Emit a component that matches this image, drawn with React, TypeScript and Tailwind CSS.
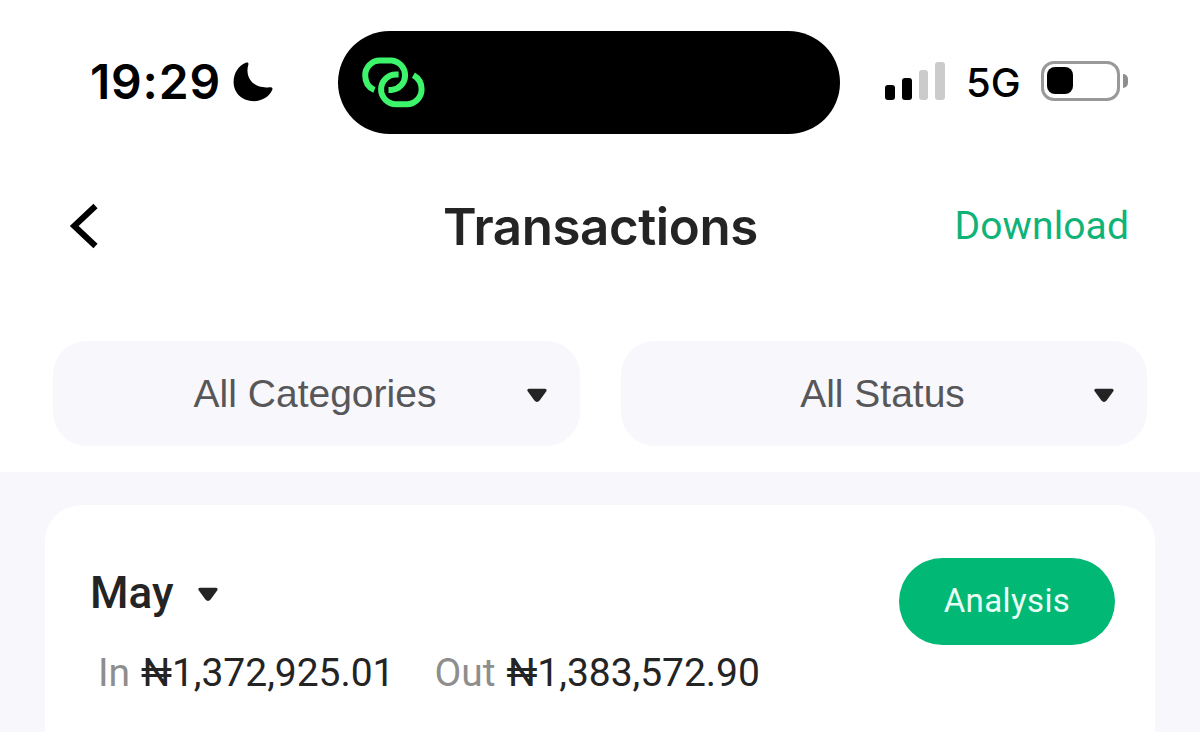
import React from 'react';
import clsx from 'clsx';

function Caret({ className }: { className?: string }) {
  return (
    <svg className={clsx('h-[15px] w-5 shrink-0', className)} viewBox="0 0 20 15">
      <path
        d="M1.9 2.3H18.1L11.4 11.6Q10 13.4 8.6 11.6Z"
        fill="#242424"
        stroke="#242424"
        strokeWidth="3"
        strokeLinejoin="round"
      />
    </svg>
  );
}

function StatusBar() {
  return (
    <div className="flex h-[103px] items-center">
      <div className="flex w-[338px] shrink-0 items-center pl-[90px]">
        <span className="w-[143px] pb-[2px] font-['Inter'] text-[48px] leading-none font-semibold tracking-[0.8px] whitespace-nowrap text-black">
          19:29
        </span>
        <svg className="mb-[2px] h-10 w-10" viewBox="0 0 40 40">
          <path
            d="M12.8 0.8C14.6 0.2 15.9 0.9 15.3 2.8C11.6 15.6 20.5 27.2 36.6 25.2C38.9 24.9 40 26 39.3 27.8C36.3 34.7 29 39.2 21 39.2C9.3 39.2 0.6 31 0.6 20C0.6 11.2 5.4 3.7 12.8 0.8Z"
            fill="#000"
          />
        </svg>
      </div>

      {/* Dynamic island */}
      <div className="flex h-[103px] w-[502px] shrink-0 items-center rounded-full bg-black pl-6">
        <svg className="h-[51px] w-[63px]" viewBox="0 0 63 51" fill="none" stroke="#3cf56b" strokeWidth="6">
          <path d="M12.4 33C6.6 30.6 3.2 25 3.2 18.3A14.8 14.8 0 0 1 18 3.5H29.5A14.8 14.8 0 0 1 29.5 33H26.5" />
          <path d="M36.6 17.4H34A14.9 14.9 0 0 0 34 47.2H44.8A14.9 14.9 0 0 0 59.6 32.3C59.6 26.5 57 21.5 51.4 18.2" />
        </svg>
      </div>

      <div className="flex items-center pb-[4px] pl-[45px]">
        <div className="flex h-[38px] w-[60px] items-end gap-[7px]">
          <div className="h-[15px] w-[10px] rounded-[3px] bg-black" />
          <div className="h-[22px] w-[10px] rounded-[3px] bg-black" />
          <div className="h-[30px] w-[10px] rounded-[3px] bg-[#cbcbcb]" />
          <div className="h-[38px] w-[10px] rounded-[3px] bg-[#cbcbcb]" />
        </div>
        <span className="mt-[5px] ml-[21px] w-[75px] font-['Inter'] text-[40px] leading-none font-medium whitespace-nowrap text-black">
          5G
        </span>
        <div className="flex h-10 w-[79px] items-center rounded-[13px] border-[3px] border-[#999] pl-[3px]">
          <div className="h-[27px] w-[26px] rounded-[8px] bg-black" />
        </div>
        <div className="ml-[3px] h-[14px] w-[5px] rounded-r-full bg-[#8f8f8f]" />
      </div>
    </div>
  );
}

function Filter({ label, className }: { label: string; className?: string }) {
  return (
    <button
      className={clsx(
        'flex h-[105px] items-center rounded-[34px] bg-[#f7f7fc] pt-[2px] pr-[33px] pl-[50px] font-["Liberation_Sans"] text-[39px] text-[#575759]',
        className
      )}
    >
      <span className="flex-1 text-center whitespace-nowrap">{label}</span>
      <Caret className="mt-[2px]" />
    </button>
  );
}

function Amount({ label, value }: { label: string; value: string }) {
  return (
    <div className="flex gap-[11px] whitespace-nowrap">
      <span className="text-[#8e8e8e]">{label}</span>
      <span className="text-[#242424]">{value}</span>
    </div>
  );
}

export default function App() {
  return (
    <div className="flex h-[732px] w-[1200px] flex-col overflow-hidden bg-[#f7f7fc] font-['Roboto']">
      <div className="h-[472px] shrink-0 bg-white pt-[31px]">
        <StatusBar />

        <header className="mt-[42px] flex h-[100px] items-center pr-[71px] pl-[69px]">
          <div className="w-[374px] shrink-0">
            <svg className="h-[46px] w-[30px]" viewBox="0 0 30 46" fill="none" stroke="#000" strokeWidth="6">
              <path d="M26.5 3L5.2 23L26.5 43" />
            </svg>
          </div>
          <h1 className="font-['Inter'] text-[51px] leading-none font-semibold tracking-[-0.4px] whitespace-nowrap text-[#242424]">
            Transactions
          </h1>
          <button className="ml-auto text-[39px] leading-none tracking-[0.1px] whitespace-nowrap text-[#0fb377]">
            Download
          </button>
        </header>

        <div className="mt-[65px] flex gap-[41px] pl-[53px]">
          <Filter label="All Categories" className="w-[527px]" />
          <Filter label="All Status" className="w-[526px]" />
        </div>
      </div>

      <section className="mx-[45px] mt-[33px] flex flex-1 justify-between rounded-t-[36px] bg-white pr-10 pl-[45px]">
        <div>
          <div className="mt-[62px] flex h-[52px] items-center">
            <h2 className="w-[108px] text-[44px] leading-none font-medium text-[#242424]">May</h2>
            <Caret className="mt-[2px]" />
          </div>
          <div className="mt-[28px] flex gap-[40px] pl-[8px] text-[39px] leading-[52px] tracking-[-0.03px]">
            <Amount label="In" value="₦1,372,925.01" />
            <Amount label="Out" value="₦1,383,572.90" />
          </div>
        </div>
        <button className="mt-[53px] h-[87px] w-[216px] shrink-0 rounded-full bg-[#02b875] pb-[2px] text-[33px] tracking-[0.4px] text-[#e9fff6]">
          Analysis
        </button>
      </section>
    </div>
  );
}
